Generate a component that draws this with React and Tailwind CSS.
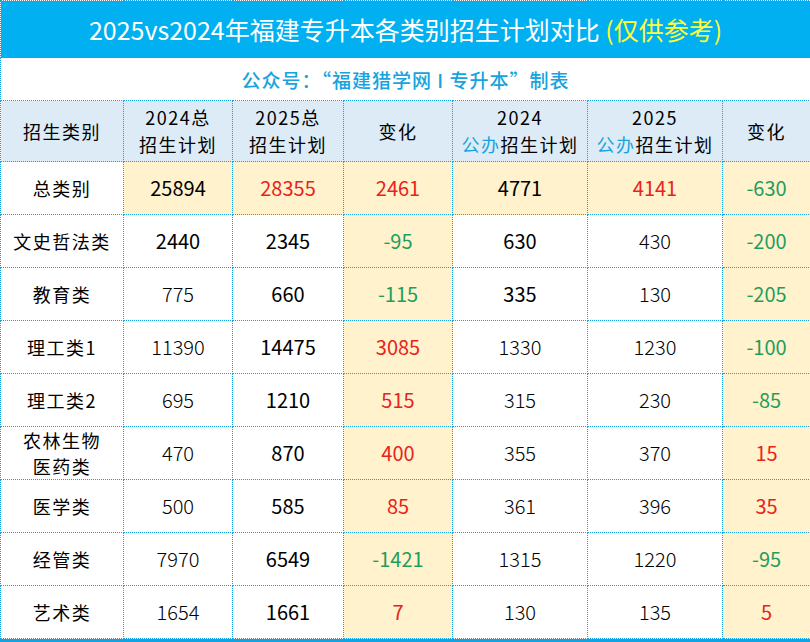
import React from "react";

const R = "text-[#e8231c]";
const G = "text-[#1f9d5c]";

// cells: [value, tone]  b = darker, l = light, r = red, g = green
const rows = [
  { name: "文史哲法类", cells: [["2440", "b"], ["2345", "b"], ["-95", "g"], ["630", "b"], ["430", "l"], ["-200", "g"]] },
  { name: "教育类", cells: [["775", "l"], ["660", "b"], ["-115", "g"], ["335", "b"], ["130", "l"], ["-205", "g"]] },
  { name: "理工类1", cells: [["11390", "l"], ["14475", "b"], ["3085", "r"], ["1330", "l"], ["1230", "l"], ["-100", "g"]] },
  { name: "理工类2", cells: [["695", "l"], ["1210", "b"], ["515", "r"], ["315", "l"], ["230", "l"], ["-85", "g"]] },
  { name: "农林生物\n医药类", cells: [["470", "l"], ["870", "b"], ["400", "r"], ["355", "l"], ["370", "l"], ["15", "r"]] },
  { name: "医学类", cells: [["500", "l"], ["585", "b"], ["85", "r"], ["361", "l"], ["396", "l"], ["35", "r"]] },
  { name: "经管类", cells: [["7970", "l"], ["6549", "b"], ["-1421", "g"], ["1315", "l"], ["1220", "l"], ["-95", "g"]] },
  { name: "艺术类", cells: [["1654", "l"], ["1661", "b"], ["7", "r"], ["130", "l"], ["135", "l"], ["5", "r"]] },
];

const cell = "border border-dotted border-[#12a3e3] text-center align-middle p-0";
const tone = {
  b: "text-black font-normal",
  l: "text-black font-light",
  r: `${R} font-normal`,
  g: `${G} font-normal`,
};

const App = () => {
  return (
    <div
      className="w-[810px] h-[642px] bg-white overflow-hidden"
      style={{ fontFamily: '"Noto Sans CJK SC", "Noto Sans", sans-serif' }}
    >
      <table className="w-[810px] table-fixed border-collapse">
        <colgroup>
          <col className="w-[123px]" />
          <col className="w-[109px]" />
          <col className="w-[111px]" />
          <col className="w-[109px]" />
          <col className="w-[135px]" />
          <col className="w-[135px]" />
          <col className="w-[88px]" />
        </colgroup>
        <tbody>
          {/* title */}
          <tr className="h-[57px]">
            <td colSpan={7} className={`${cell} bg-[#00b0f0] text-white text-[25px] leading-none`}>
              2025vs2024年福建专升本各类别招生计划对比 <span className="text-[#ffff33]">(仅供参考)</span>
            </td>
          </tr>
          {/* subtitle */}
          <tr className="h-[43px]">
            <td colSpan={7} className={`${cell} text-[#16a3de] text-[19px] tracking-[1px] font-medium leading-none`}>
              公众号：“福建猎学网 I 专升本”制表
            </td>
          </tr>
          {/* header */}
          <tr className="h-[61px] bg-[#ddebf7] text-black text-[18px] leading-[27px] tracking-[1.5px]">
            <td className={cell}>招生类别</td>
            <td className={cell}>2024总<br />招生计划</td>
            <td className={cell}>2025总<br />招生计划</td>
            <td className={cell}>变化</td>
            <td className={cell}>2024<br /><span className="text-[#16a3de]">公办</span>招生计划</td>
            <td className={cell}>2025<br /><span className="text-[#16a3de]">公办</span>招生计划</td>
            <td className={cell}>变化</td>
          </tr>
          {/* total row */}
          <tr className="h-[53px] text-[20px]">
            <td className={`${cell} text-[18px] tracking-[1.5px]`}>总类别</td>
            <td className={`${cell} bg-[#fff2cc] text-black`}>25894</td>
            <td className={`${cell} bg-[#fff2cc] ${R}`}>28355</td>
            <td className={`${cell} bg-[#fff2cc] ${R}`}>2461</td>
            <td className={`${cell} bg-[#fff2cc] text-black`}>4771</td>
            <td className={`${cell} bg-[#fff2cc] ${R}`}>4141</td>
            <td className={`${cell} bg-[#fff2cc] ${G}`}>-630</td>
          </tr>
          {rows.map((r) => (
            <tr key={r.name} className="h-[53px] text-[20px]">
              <td className={`${cell} text-[18px] tracking-[1.5px] leading-[26px] whitespace-pre-line`}>
                {r.name}
              </td>
              {r.cells.map(([v, t], i) => (
                <td
                  key={i}
                  className={`${cell} ${tone[t]} ${i === 2 || i === 5 ? "bg-[#fff2cc]" : ""}`}
                >
                  {v}
                </td>
              ))}
            </tr>
          ))}
        </tbody>
      </table>
      <div className="h-[4px] bg-[#12a3e3]" />
    </div>
  );
};

export default App;
